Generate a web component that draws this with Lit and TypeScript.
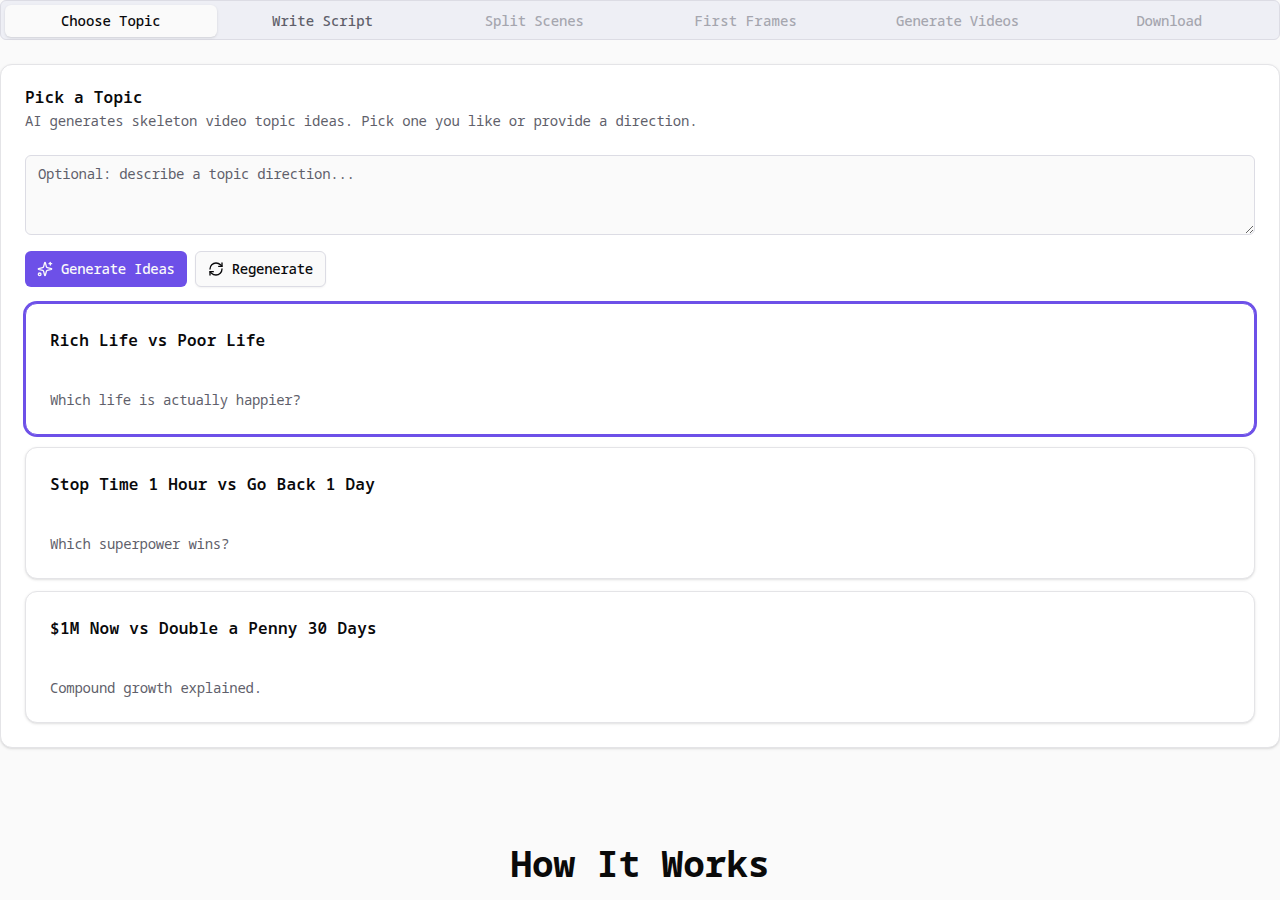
import { LitElement, html, css, svg } from "lit";
import { customElement, state } from "lit/decorators.js";

const sparkles = html`<svg viewBox="0 0 24 24" class="icon">${svg`
  <path d="M9.937 15.5A2 2 0 0 0 8.5 14.063l-6.135-1.582a.5.5 0 0 1 0-.962L8.5 9.936A2 2 0 0 0 9.937 8.5l1.582-6.135a.5.5 0 0 1 .963 0L14.063 8.5A2 2 0 0 0 15.5 9.937l6.135 1.581a.5.5 0 0 1 0 .964L15.5 14.063a2 2 0 0 0-1.437 1.437l-1.582 6.135a.5.5 0 0 1-.963 0z"/>
  <path d="M20 2v4"/><path d="M22 4h-4"/><circle cx="4" cy="20" r="2"/>`}</svg>`;

const refresh = html`<svg viewBox="0 0 24 24" class="icon">${svg`
  <path d="M3 12a9 9 0 0 1 9-9 9.75 9.75 0 0 1 6.74 2.74L21 8"/><path d="M21 3v5h-5"/>
  <path d="M21 12a9 9 0 0 1-9 9 9.75 9.75 0 0 1-6.74-2.74L3 16"/><path d="M8 16H3v5"/>`}</svg>`;

@customElement("app-root")
export class AppRoot extends LitElement {
  @state() selected = 0;

  private steps = [
    { label: "Choose Topic", tracking: -0.1 },
    { label: "Write Script", tracking: 0.02 },
    { label: "Split Scenes", tracking: -0.15 },
    { label: "First Frames", tracking: 0.15 },
    { label: "Generate Videos", tracking: -0.2 },
    { label: "Download", tracking: -0.22 },
  ];
  private topics = [
    { title: "Rich Life vs Poor Life", titleTracking: 0.19, text: "Which life is actually happier?", tracking: -0.32 },
    { title: "Stop Time 1 Hour vs Go Back 1 Day", titleTracking: 0.25, text: "Which superpower wins?", tracking: -0.26 },
    { title: "$1M Now vs Double a Penny 30 Days", titleTracking: 0.31, text: "Compound growth explained.", tracking: -0.25 },
  ];

  static styles = css`
    :host { display: block; height: 900px; overflow: hidden; background: #fafafa; color: #09090b;
      font-family: "Noto Sans Mono", "Noto Sans Mono CJK SC", monospace; font-size: 14px; line-height: 20px; }
    * { box-sizing: border-box; margin: 0; }
    .steps { display: grid; grid-template-columns: repeat(6, 1fr); height: 40px; padding: 4px;
      border: 1px solid #dcdce4; border-radius: 6px; background: #eeeff5; }
    .step { display: flex; align-items: center; justify-content: center; height: 32px; border: 0; border-radius: 6px;
      background: none; font: inherit; font-weight: 500; color: #5f5f6b; }
    .step.active { background: #fafafa; color: #09090b; box-shadow: 0 1px 3px rgb(0 0 0 / .1), 0 1px 2px -1px rgb(0 0 0 / .1); }
    .step.locked { opacity: .5; }
    .card { border: 1px solid #e4e4e7; border-radius: 12px; background: #fff;
      box-shadow: 0 1px 3px rgb(0 0 0 / .1), 0 1px 2px -1px rgb(0 0 0 / .1); }
    .panel { margin-top: 24px; padding: 24px; }
    .title { font-size: 16px; line-height: 16px; font-weight: 600; letter-spacing: .22px; }
    .muted { color: #5f5f6b; }
    .panel-text { margin-top: 6px; letter-spacing: -.2px; }
    .direction { display: block; width: 100%; height: 80px; margin-top: 24px; padding: 8px 12px; border: 1px solid #dcdce4;
      border-radius: 6px; background: #fafafa; font: inherit; letter-spacing: -.28px; resize: vertical; }
    .direction::placeholder { color: #5f5f6b; }
    .actions { display: flex; gap: 8px; margin: 16px 0; }
    .button { display: flex; align-items: center; gap: 8px; height: 36px; padding: 0 12px; border: 0; border-radius: 6px;
      font: inherit; font-weight: 500; letter-spacing: -.28px; white-space: nowrap; color: #fafafa; background: #6d50e8; }
    .outline { border: 1px solid #dcdce4; background: #fafafa; color: #09090b; box-shadow: 0 1px 2px rgb(0 0 0 / .05); }
    .icon { width: 16px; height: 16px; fill: none; stroke: currentColor; stroke-width: 2; stroke-linecap: round; stroke-linejoin: round; }
    .topics { display: grid; gap: 12px; }
    .topic { height: 132px; padding: 24px; display: flex; flex-direction: column; justify-content: space-between; }
    .topic .title { line-height: 24px; }
    .topic.selected { border-color: #6d50e8; box-shadow: 0 0 0 2px #6d50e8; }
    .heading { margin-top: 96px; text-align: center; font-size: 36px; line-height: 40px; font-weight: 700; color: #0a0a0a; }
  `;

  render() {
    return html`
      <nav class="steps">${this.steps.map((s, i) => html`<button class="step ${i === 0 ? "active" : i > 1 ? "locked" : ""}" style="letter-spacing:${s.tracking}px">${s.label}</button>`)}</nav>
      <section class="card panel">
        <h3 class="title">Pick a Topic</h3>
        <p class="muted panel-text">AI generates skeleton video topic ideas. Pick one you like or provide a direction.</p>
        <textarea class="direction" placeholder="Optional: describe a topic direction..."></textarea>
        <div class="actions">
          <button class="button">${sparkles}Generate Ideas</button>
          <button class="button outline">${refresh}Regenerate</button>
        </div>
        <div class="topics">${this.topics.map((t, i) => html`
          <article class="card topic ${i === this.selected ? "selected" : ""}" @click=${() => (this.selected = i)}>
            <h4 class="title" style="letter-spacing:${t.titleTracking}px">${t.title}</h4>
            <p class="muted" style="letter-spacing:${t.tracking}px">${t.text}</p>
          </article>`)}</div>
      </section>
      <h2 class="heading">How It Works</h2>`;
  }
}
